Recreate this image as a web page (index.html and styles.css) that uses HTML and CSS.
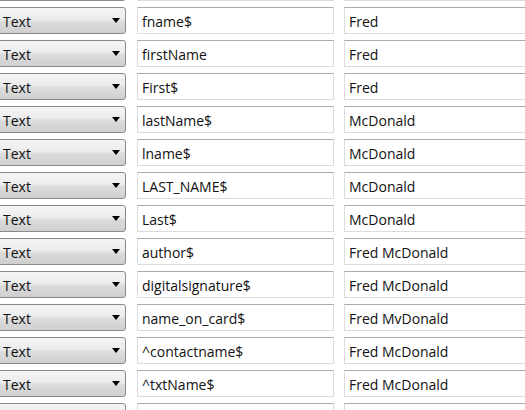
FILE: index.html
```html
<!DOCTYPE html>
<html>
<head>
<meta charset="utf-8">
<link rel="stylesheet" href="styles.css">
</head>
<body>
<div class="list">
  <div class="row"><div class="combo"><span></span><i class="arrow"></i></div><div class="field"></div><div class="field wide"></div></div>
  <div class="row"><div class="combo"><span>Text</span><i class="arrow"></i></div><div class="field">fname$</div><div class="field wide">Fred</div></div>
  <div class="row"><div class="combo"><span>Text</span><i class="arrow"></i></div><div class="field">firstName</div><div class="field wide">Fred</div></div>
  <div class="row"><div class="combo"><span>Text</span><i class="arrow"></i></div><div class="field">First$</div><div class="field wide">Fred</div></div>
  <div class="row"><div class="combo"><span>Text</span><i class="arrow"></i></div><div class="field">lastName$</div><div class="field wide">McDonald</div></div>
  <div class="row"><div class="combo"><span>Text</span><i class="arrow"></i></div><div class="field">lname$</div><div class="field wide">McDonald</div></div>
  <div class="row"><div class="combo"><span>Text</span><i class="arrow"></i></div><div class="field">LAST_NAME$</div><div class="field wide">McDonald</div></div>
  <div class="row"><div class="combo"><span>Text</span><i class="arrow"></i></div><div class="field">Last$</div><div class="field wide">McDonald</div></div>
  <div class="row"><div class="combo"><span>Text</span><i class="arrow"></i></div><div class="field">author$</div><div class="field wide">Fred McDonald</div></div>
  <div class="row"><div class="combo"><span>Text</span><i class="arrow"></i></div><div class="field">digitalsignature$</div><div class="field wide">Fred McDonald</div></div>
  <div class="row"><div class="combo"><span>Text</span><i class="arrow"></i></div><div class="field">name_on_card$</div><div class="field wide">Fred MvDonald</div></div>
  <div class="row"><div class="combo"><span>Text</span><i class="arrow"></i></div><div class="field">^contactname$</div><div class="field wide">Fred McDonald</div></div>
  <div class="row"><div class="combo"><span>Text</span><i class="arrow"></i></div><div class="field">^txtName$</div><div class="field wide">Fred McDonald</div></div>
  <div class="row"><div class="combo"><span></span><i class="arrow"></i></div><div class="field"></div><div class="field wide"></div></div>
</div>
</body>
</html>
```
FILE: styles.css
```css
html, body {
  margin: 0;
  padding: 0;
  background: #ffffff;
  overflow: hidden;
  width: 525px;
  height: 410px;
}
body {
  font-family: "Open Sans", "Noto Sans", sans-serif;
  font-size: 14px;
  color: #111;
}
.list {
  display: flex;
  flex-direction: column;
  gap: 6px;
  margin-top: -26px;
  margin-left: -10px;
  height: 436px;
}
.row {
  display: grid;
  grid-template-columns: 137px 197px 191px;
  column-gap: 10px;
  height: 27px;
  flex: none;
}
.combo {
  box-sizing: border-box;
  height: 27px;
  border: 1px solid #8a8a8a;
  border-radius: 3px;
  background: linear-gradient(#f5f5f5 0%, #ececec 45%, #dcdcdc 55%, #cfcfcf 100%);
  display: flex;
  align-items: center;
  justify-content: space-between;
  padding: 1px 4px 0 12px;
  margin-right: 1px;
}
.arrow {
  width: 0;
  height: 0;
  border-left: 4px solid transparent;
  border-right: 4px solid transparent;
  border-top: 5px solid #000;
  margin-right: 1px;
  margin-top: -2px;
}
.field {
  box-sizing: border-box;
  height: 27px;
  border: 1px solid #dcdcdc;
  border-top-color: #ababab;
  background: #fff;
  display: flex;
  align-items: center;
  padding: 1px 0 0 4px;
  white-space: nowrap;
  overflow: hidden;
}
.wide {
  border-right: none;
}
```
